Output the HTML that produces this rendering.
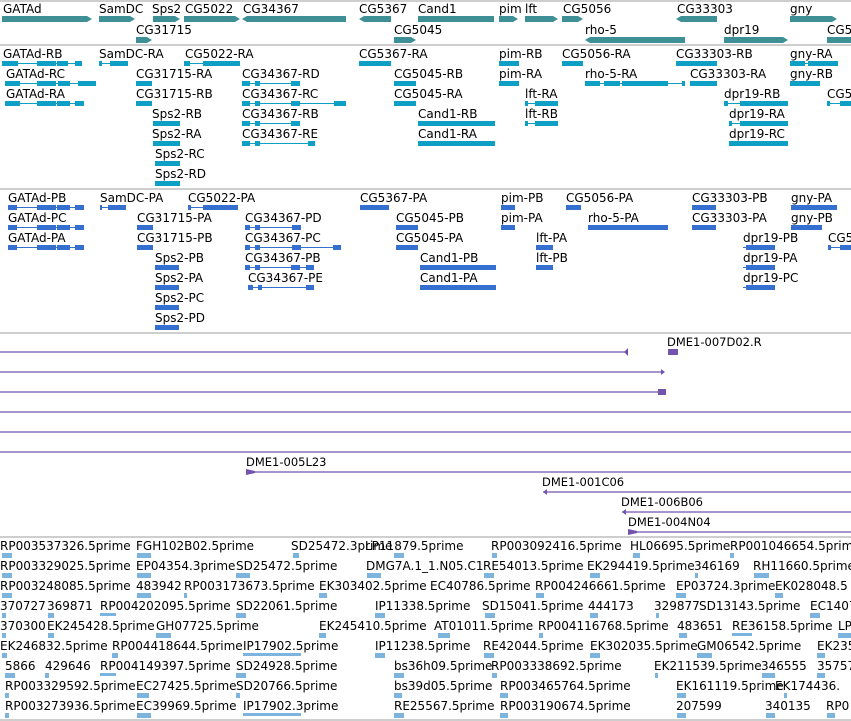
<!DOCTYPE html>
<html><head><meta charset="utf-8"><style>
html,body{margin:0;padding:0;background:#fff;width:851px;height:721px;overflow:hidden}
svg{display:block}
text{font-family:"DejaVu Sans","Liberation Sans",sans-serif;font-size:12px;fill:#000}
</style></head><body>
<svg width="851" height="721" viewBox="0 0 851 721" xmlns="http://www.w3.org/2000/svg">
<g stroke="#bdbdbd" stroke-width="1.5">
<line x1="0" y1="1" x2="851" y2="1"/><line x1="0" y1="45" x2="851" y2="45"/><line x1="0" y1="189" x2="851" y2="189"/><line x1="0" y1="333" x2="851" y2="333"/><line x1="0" y1="537" x2="851" y2="537"/><line x1="0" y1="720" x2="851" y2="720"/>
</g>

<!-- Track 1 genes -->
<g fill="#3f9096">
<polygon points="2,16 87,16 92,19 87,22 2,22"/>
<polygon points="99,16 130,16 135,19 130,22 99,22"/>
<polygon points="153,16 175,16 180,19 175,22 153,22"/>
<polygon points="184,16 235,16 240,19 235,22 184,22"/>
<polygon points="242,19 247,16 346,16 346,22 247,22"/>
<polygon points="359,19 364,16 391,16 391,22 364,22"/>
<polygon points="418,16 494,16 494,22 418,22"/>
<polygon points="499,16 513,16 518,19 513,22 499,22"/>
<polygon points="525,16 553,16 558,19 553,22 525,22"/>
<polygon points="562,16 578,16 583,19 578,22 562,22"/>
<polygon points="676,19 681,16 717,16 717,22 681,22"/>
<polygon points="790,16 832,16 837,19 832,22 790,22"/>
<polygon points="136,37 147,37 152,40 147,43 136,43"/>
<polygon points="394,37 411,37 416,40 411,43 394,43"/>
<polygon points="585,40 590,37 685,37 685,43 590,43"/>
<polygon points="724,37 783,37 788,40 783,43 724,43"/>
<polygon points="827,37 851,37 851,43 827,43"/>
</g>
<g>
<text x="3" y="13">GATAd</text><text x="99" y="13">SamDC</text><text x="152" y="13">Sps2</text><text x="185" y="13">CG5022</text><text x="243" y="13">CG34367</text><text x="359" y="13">CG5367</text><text x="418" y="13">Cand1</text><text x="499" y="13">pim</text><text x="525" y="13">lft</text><text x="563" y="13">CG5056</text><text x="677" y="13">CG33303</text><text x="790" y="13">gny</text>
<text x="136" y="34">CG31715</text><text x="394" y="34">CG5045</text><text x="585" y="34">rho-5</text><text x="724" y="34">dpr19</text><text x="827" y="34">CG5</text>
</g>

<!-- Track 2 transcripts -->
<g fill="#0e9fc4" stroke="#0e9fc4">
<g stroke-width="1">
<line x1="2" y1="63.5" x2="82" y2="63.5"/><line x1="99" y1="63.5" x2="128" y2="63.5"/><line x1="184" y1="63.5" x2="240" y2="63.5"/><line x1="790" y1="63.5" x2="838" y2="63.5"/>
<line x1="5" y1="83.5" x2="96" y2="83.5"/><line x1="242" y1="83.5" x2="300" y2="83.5"/><line x1="585" y1="83.5" x2="685" y2="83.5"/>
<line x1="5" y1="103.5" x2="84" y2="103.5"/><line x1="242" y1="103.5" x2="346" y2="103.5"/><line x1="525" y1="103.5" x2="558" y2="103.5"/><line x1="724" y1="103.5" x2="788" y2="103.5"/><line x1="827" y1="103.5" x2="851" y2="103.5"/>
<line x1="242" y1="123.5" x2="300" y2="123.5"/><line x1="525" y1="123.5" x2="558" y2="123.5"/><line x1="729" y1="123.5" x2="788" y2="123.5"/>
<line x1="242" y1="143.5" x2="315" y2="143.5"/><line x1="729" y1="143.5" x2="788" y2="143.5"/>
</g>
<g stroke="none">
<rect x="2" y="61" width="16" height="5"/><rect x="37" y="61" width="19" height="5"/><rect x="57" y="61" width="11" height="5"/><rect x="75" y="61" width="7" height="5"/>
<rect x="99" y="61" width="3" height="5"/><rect x="110" y="61" width="18" height="5"/>
<rect x="184" y="61" width="6" height="5"/><rect x="203" y="61" width="37" height="5"/>
<rect x="359" y="61" width="32" height="5"/><rect x="499" y="61" width="20" height="5"/><rect x="562" y="61" width="21" height="5"/><rect x="676" y="61" width="41" height="5"/>
<rect x="790" y="61" width="15" height="5"/><rect x="808" y="61" width="30" height="5"/>
<rect x="5" y="81" width="15" height="5"/><rect x="37" y="81" width="19" height="5"/><rect x="58" y="81" width="12" height="5"/><rect x="78" y="81" width="18" height="5"/>
<rect x="136" y="81" width="16" height="5"/><rect x="242" y="81" width="8" height="5"/><rect x="255" y="81" width="5" height="5"/><rect x="291" y="81" width="9" height="5"/>
<rect x="394" y="81" width="22" height="5"/><rect x="499" y="81" width="20" height="5"/>
<rect x="585" y="81" width="15" height="5"/><rect x="604" y="81" width="16" height="5"/><rect x="622" y="81" width="46" height="5"/><rect x="682" y="81" width="3" height="5"/>
<rect x="690" y="81" width="27" height="5"/><rect x="790" y="81" width="30" height="5"/>
<rect x="5" y="101" width="15" height="5"/><rect x="37" y="101" width="19" height="5"/><rect x="57" y="101" width="13" height="5"/><rect x="75" y="101" width="9" height="5"/>
<rect x="136" y="101" width="16" height="5"/><rect x="242" y="101" width="8" height="5"/><rect x="255" y="101" width="5" height="5"/><rect x="291" y="101" width="9" height="5"/><rect x="334" y="101" width="12" height="5"/>
<rect x="394" y="101" width="22" height="5"/><rect x="525" y="101" width="3" height="5"/><rect x="535" y="101" width="23" height="5"/>
<rect x="724" y="101" width="4" height="5"/><rect x="740" y="101" width="48" height="5"/><rect x="827" y="101" width="3" height="5"/><rect x="840" y="101" width="11" height="5"/>
<rect x="153" y="121" width="27" height="5"/><rect x="242" y="121" width="8" height="5"/><rect x="255" y="121" width="5" height="5"/><rect x="291" y="121" width="9" height="5"/>
<rect x="418" y="121" width="77" height="5"/><rect x="525" y="121" width="3" height="5"/><rect x="535" y="121" width="23" height="5"/><rect x="729" y="121" width="3" height="5"/><rect x="740" y="121" width="48" height="5"/>
<rect x="153" y="141" width="27" height="5"/><rect x="242" y="141" width="8" height="5"/><rect x="255" y="141" width="5" height="5"/><rect x="308" y="141" width="7" height="5"/>
<rect x="418" y="141" width="77" height="5"/><rect x="729" y="141" width="59" height="5"/>
<rect x="155" y="161" width="25" height="5"/><rect x="155" y="181" width="25" height="5"/>
</g>
</g>
<g>
<text x="3" y="58">GATAd-RB</text><text x="99" y="58">SamDC-RA</text><text x="185" y="58">CG5022-RA</text><text x="359" y="58">CG5367-RA</text><text x="499" y="58">pim-RB</text><text x="562" y="58">CG5056-RA</text><text x="676" y="58">CG33303-RB</text><text x="790" y="58">gny-RA</text>
<text x="6" y="78">GATAd-RC</text><text x="136" y="78">CG31715-RA</text><text x="242" y="78">CG34367-RD</text><text x="394" y="78">CG5045-RB</text><text x="499" y="78">pim-RA</text><text x="585" y="78">rho-5-RA</text><text x="690" y="78">CG33303-RA</text><text x="790" y="78">gny-RB</text>
<text x="6" y="98">GATAd-RA</text><text x="136" y="98">CG31715-RB</text><text x="242" y="98">CG34367-RC</text><text x="394" y="98">CG5045-RA</text><text x="525" y="98">lft-RA</text><text x="724" y="98">dpr19-RB</text><text x="827" y="98">CG5</text>
<text x="152" y="118">Sps2-RB</text><text x="242" y="118">CG34367-RB</text><text x="418" y="118">Cand1-RB</text><text x="525" y="118">lft-RB</text><text x="729" y="118">dpr19-RA</text>
<text x="152" y="138">Sps2-RA</text><text x="242" y="138">CG34367-RE</text><text x="418" y="138">Cand1-RA</text><text x="729" y="138">dpr19-RC</text>
<text x="155" y="158">Sps2-RC</text><text x="155" y="178">Sps2-RD</text>
</g>

<!-- Track 3 proteins -->
<g fill="#3570d0" stroke="#3570d0">
<g stroke-width="1">
<line x1="8" y1="207.5" x2="84" y2="207.5"/><line x1="100" y1="207.5" x2="126" y2="207.5"/><line x1="188" y1="207.5" x2="238" y2="207.5"/>
<line x1="8" y1="227.5" x2="84" y2="227.5"/><line x1="245" y1="227.5" x2="301" y2="227.5"/><line x1="588" y1="227.5" x2="668" y2="227.5"/>
<line x1="8" y1="247.5" x2="84" y2="247.5"/><line x1="245" y1="247.5" x2="341" y2="247.5"/><line x1="743" y1="247.5" x2="775" y2="247.5"/><line x1="828" y1="247.5" x2="851" y2="247.5"/>
<line x1="245" y1="267.5" x2="314" y2="267.5"/><line x1="743" y1="267.5" x2="775" y2="267.5"/>
<line x1="248" y1="287.5" x2="314" y2="287.5"/><line x1="743" y1="287.5" x2="775" y2="287.5"/>
</g>
<g stroke="none">
<rect x="8" y="205" width="9" height="5"/><rect x="37" y="205" width="19" height="5"/><rect x="57" y="205" width="13" height="5"/><rect x="75" y="205" width="9" height="5"/>
<rect x="8" y="225" width="9" height="5"/><rect x="37" y="225" width="19" height="5"/><rect x="57" y="225" width="13" height="5"/><rect x="75" y="225" width="9" height="5"/>
<rect x="8" y="245" width="9" height="5"/><rect x="37" y="245" width="19" height="5"/><rect x="57" y="245" width="13" height="5"/><rect x="75" y="245" width="9" height="5"/>
<rect x="100" y="205" width="2" height="5"/><rect x="108" y="205" width="18" height="5"/>
<rect x="188" y="205" width="3" height="5"/><rect x="203" y="205" width="35" height="5"/>
<rect x="360" y="205" width="29" height="5"/><rect x="501" y="205" width="14" height="5"/><rect x="566" y="205" width="15" height="5"/><rect x="692" y="205" width="24" height="5"/><rect x="791" y="205" width="46" height="5"/>
<rect x="137" y="225" width="16" height="5"/><rect x="245" y="225" width="5" height="5"/><rect x="255" y="225" width="5" height="5"/><rect x="292" y="225" width="9" height="5"/>
<rect x="396" y="225" width="22" height="5"/><rect x="501" y="225" width="14" height="5"/><rect x="588" y="225" width="80" height="5"/><rect x="692" y="225" width="24" height="5"/><rect x="791" y="225" width="31" height="5"/>
<rect x="137" y="245" width="16" height="5"/><rect x="245" y="245" width="5" height="5"/><rect x="255" y="245" width="5" height="5"/><rect x="292" y="245" width="9" height="5"/><rect x="333" y="245" width="8" height="5"/>
<rect x="396" y="245" width="22" height="5"/><rect x="536" y="245" width="17" height="5"/><rect x="746" y="245" width="29" height="5"/><rect x="840" y="245" width="11" height="5"/><rect x="828" y="245" width="3" height="5"/>
<rect x="155" y="265" width="24" height="5"/><rect x="245" y="265" width="5" height="5"/><rect x="255" y="265" width="5" height="5"/><rect x="291" y="265" width="9" height="5"/><rect x="306" y="265" width="8" height="5"/>
<rect x="420" y="265" width="76" height="5"/><rect x="536" y="265" width="17" height="5"/><rect x="746" y="265" width="29" height="5"/>
<rect x="155" y="285" width="24" height="5"/><rect x="248" y="285" width="5" height="5"/><rect x="258" y="285" width="4" height="5"/><rect x="306" y="285" width="8" height="5"/>
<rect x="420" y="285" width="76" height="5"/><rect x="746" y="285" width="29" height="5"/>
<rect x="155" y="305" width="24" height="5"/><rect x="155" y="325" width="24" height="5"/>
</g>
</g>
<g>
<text x="8" y="202">GATAd-PB</text><text x="100" y="202">SamDC-PA</text><text x="188" y="202">CG5022-PA</text><text x="360" y="202">CG5367-PA</text><text x="501" y="202">pim-PB</text><text x="566" y="202">CG5056-PA</text><text x="692" y="202">CG33303-PB</text><text x="791" y="202">gny-PA</text>
<text x="8" y="222">GATAd-PC</text><text x="137" y="222">CG31715-PA</text><text x="245" y="222">CG34367-PD</text><text x="396" y="222">CG5045-PB</text><text x="501" y="222">pim-PA</text><text x="588" y="222">rho-5-PA</text><text x="692" y="222">CG33303-PA</text><text x="791" y="222">gny-PB</text>
<text x="8" y="242">GATAd-PA</text><text x="137" y="242">CG31715-PB</text><text x="245" y="242">CG34367-PC</text><text x="396" y="242">CG5045-PA</text><text x="536" y="242">lft-PA</text><text x="743" y="242">dpr19-PB</text><text x="828" y="242">CG5</text>
<text x="155" y="262">Sps2-PB</text><text x="245" y="262">CG34367-PB</text><text x="420" y="262">Cand1-PB</text><text x="536" y="262">lft-PB</text><text x="743" y="262">dpr19-PA</text>
<text x="155" y="282">Sps2-PA</text><text x="248" y="282">CG34367-PE</text><text x="420" y="282">Cand1-PA</text><text x="743" y="282">dpr19-PC</text>
<text x="155" y="302">Sps2-PC</text><text x="155" y="322">Sps2-PD</text>
</g>

<!-- Track 4 clones -->
<g stroke="#7453ad" stroke-width="1.3" fill="#7453ad">
<line x1="0" y1="352" x2="628" y2="352"/><polygon points="624,352 628,348 628,356" stroke="none"/><rect x="668" y="349" width="10" height="6" stroke="none"/>
<line x1="0" y1="372" x2="664" y2="372"/><polygon points="661,369 665,372 661,375" stroke="none"/>
<line x1="0" y1="392" x2="666" y2="392"/><rect x="658" y="389" width="8" height="6" stroke="none"/>
<line x1="0" y1="412" x2="851" y2="412"/><line x1="0" y1="432" x2="851" y2="432"/><line x1="0" y1="452" x2="851" y2="452"/>
<line x1="246" y1="472" x2="851" y2="472"/><polygon points="246,469 255,471 255,473 246,475" stroke="none"/>
<line x1="543" y1="492" x2="851" y2="492"/><polygon points="543,492 547,489 547,495" stroke="none"/>
<line x1="622" y1="512" x2="851" y2="512"/><polygon points="622,512 626,509 626,515" stroke="none"/>
<line x1="628" y1="532" x2="851" y2="532"/><polygon points="628,529 637,531 637,533 628,535" stroke="none"/>
</g>
<g style="font-size:11.5px">
<text x="667" y="346" style="font-size:11.5px">DME1-007D02.R</text>
<text x="246" y="466" style="font-size:11.5px">DME1-005L23</text>
<text x="542" y="486" style="font-size:11.5px">DME1-001C06</text>
<text x="621" y="506" style="font-size:11.5px">DME1-006B06</text>
<text x="628" y="526" style="font-size:11.5px">DME1-004N04</text>
</g>

<!-- Track 5 ESTs -->
<g fill="#7db4dd">
<rect x="2" y="553" width="10" height="5"/><rect x="137" y="553" width="14" height="5"/><rect x="293" y="553" width="6" height="5"/><rect x="394" y="553" width="10" height="5"/><rect x="492" y="553" width="5" height="5"/><rect x="633" y="553" width="7" height="5"/><rect x="730" y="553" width="4" height="5"/>
<rect x="2" y="573" width="10" height="5"/><rect x="137" y="573" width="14" height="5"/><rect x="236" y="573" width="14" height="5"/><rect x="367" y="573" width="14" height="5"/><rect x="484" y="573" width="10" height="5"/><rect x="590" y="573" width="10" height="5"/><rect x="695" y="573" width="3" height="5"/><rect x="754" y="573" width="15" height="5"/>
<rect x="2" y="593" width="10" height="5"/><rect x="137" y="593" width="14" height="5"/><rect x="184" y="593" width="3" height="5"/><rect x="319" y="593" width="8" height="5"/><rect x="536" y="593" width="8" height="5"/><rect x="676" y="593" width="10" height="5"/><rect x="775" y="593" width="8" height="5"/>
<rect x="2" y="613" width="4" height="5"/><rect x="48" y="613" width="6" height="5"/><rect x="100" y="613" width="16" height="3"/><rect x="236" y="613" width="10" height="5"/><rect x="375" y="613" width="10" height="5"/><rect x="485" y="613" width="10" height="5"/><rect x="590" y="613" width="8" height="5"/><rect x="656" y="613" width="3" height="5"/><rect x="810" y="613" width="10" height="5"/>
<rect x="2" y="633" width="4" height="5"/><rect x="48" y="633" width="6" height="5"/><rect x="156" y="633" width="15" height="5"/><rect x="319" y="633" width="7" height="5"/><rect x="438" y="633" width="12" height="5"/><rect x="539" y="633" width="4" height="5"/><rect x="679" y="633" width="8" height="5"/><rect x="732" y="633" width="20" height="3"/><rect x="838" y="633" width="13" height="5"/>
<rect x="2" y="653" width="5" height="5"/><rect x="112" y="653" width="6" height="5"/><rect x="243" y="653" width="58" height="3"/><rect x="375" y="653" width="10" height="5"/><rect x="484" y="653" width="10" height="5"/><rect x="590" y="653" width="10" height="5"/><rect x="697" y="653" width="15" height="5"/><rect x="817" y="653" width="8" height="5"/>
<rect x="5" y="673" width="10" height="5"/><rect x="45" y="673" width="4" height="5"/><rect x="100" y="673" width="16" height="3"/><rect x="236" y="673" width="10" height="5"/><rect x="394" y="673" width="10" height="5"/><rect x="492" y="673" width="5" height="5"/><rect x="655" y="673" width="3" height="5"/><rect x="762" y="673" width="13" height="5"/><rect x="817" y="673" width="8" height="5"/>
<rect x="5" y="693" width="4" height="5"/><rect x="137" y="693" width="12" height="5"/><rect x="236" y="693" width="4" height="5"/><rect x="394" y="693" width="8" height="5"/><rect x="500" y="693" width="8" height="5"/><rect x="677" y="693" width="9" height="5"/><rect x="784" y="693" width="3" height="5"/>
<rect x="5" y="713" width="4" height="5"/><rect x="137" y="713" width="14" height="5"/><rect x="243" y="713" width="58" height="3"/><rect x="394" y="713" width="10" height="5"/><rect x="500" y="713" width="8" height="5"/><rect x="677" y="713" width="9" height="5"/><rect x="766" y="713" width="9" height="5"/><rect x="827" y="713" width="8" height="5"/>
</g>
<g>
<text x="0" y="550">RP003537326.5prime</text><text x="136" y="550">FGH102B02.5prime</text><text x="291" y="550">SD25472.3prime</text><text x="365" y="550">LP11879.5prime</text><text x="491" y="550">RP003092416.5prime</text><text x="630" y="550">HL06695.5prime</text><text x="730" y="550">RP001046654.5prime</text>
<text x="0" y="570">RP003329025.5prime</text><text x="136" y="570">EP04354.3prime</text><text x="236" y="570">SD25472.5prime</text><text x="366" y="570">DMG7A.1_1.N05.C1</text><text x="483" y="570">RE54013.5prime</text><text x="587" y="570">EK294419.5prime</text><text x="694" y="570">346169</text><text x="753" y="570">RH11660.5prime</text>
<text x="0" y="590">RP003248085.5prime</text><text x="136" y="590">483942</text><text x="184" y="590">RP003173673.5prime</text><text x="319" y="590">EK303402.5prime</text><text x="430" y="590">EC40786.5prime</text><text x="535" y="590">RP004246661.5prime</text><text x="676" y="590">EP03724.3prime</text><text x="775" y="590">EK028048.5</text>
<text x="0" y="610">370727</text><text x="47" y="610">369871</text><text x="100" y="610">RP004202095.5prime</text><text x="236" y="610">SD22061.5prime</text><text x="375" y="610">IP11338.5prime</text><text x="482" y="610">SD15041.5prime</text><text x="588" y="610">444173</text><text x="654" y="610">329877</text><text x="699" y="610">SD13143.5prime</text><text x="810" y="610">EC1407</text>
<text x="0" y="630">370300</text><text x="47" y="630">EK245428.5prime</text><text x="156" y="630">GH07725.5prime</text><text x="319" y="630">EK245410.5prime</text><text x="434" y="630">AT01011.5prime</text><text x="538" y="630">RP004116768.5prime</text><text x="677" y="630">483651</text><text x="732" y="630">RE36158.5prime</text><text x="838" y="630">LP</text>
<text x="0" y="650">EK246832.5prime</text><text x="112" y="650">RP004418644.5prime</text><text x="243" y="650">IP17902.5prime</text><text x="375" y="650">IP11238.5prime</text><text x="483" y="650">RE42044.5prime</text><text x="590" y="650">EK302035.5prime</text><text x="697" y="650">GM06542.5prime</text><text x="817" y="650">EK235</text>
<text x="5" y="670">5866</text><text x="45" y="670">429646</text><text x="100" y="670">RP004149397.5prime</text><text x="236" y="670">SD24928.5prime</text><text x="394" y="670">bs36h09.5prime</text><text x="491" y="670">RP003338692.5prime</text><text x="654" y="670">EK211539.5prime</text><text x="761" y="670">346555</text><text x="817" y="670">35757</text>
<text x="5" y="690">RP003329592.5prime</text><text x="136" y="690">EC27425.5prime</text><text x="236" y="690">SD20766.5prime</text><text x="394" y="690">bs39d05.5prime</text><text x="500" y="690">RP003465764.5prime</text><text x="676" y="690">EK161119.5prime</text><text x="775" y="690">EK174436.</text>
<text x="5" y="710">RP003273936.5prime</text><text x="136" y="710">EC39969.5prime</text><text x="243" y="710">IP17902.3prime</text><text x="394" y="710">RE25567.5prime</text><text x="500" y="710">RP003190674.5prime</text><text x="676" y="710">207599</text><text x="765" y="710">340135</text><text x="826" y="710">RP0</text>
</g>
</svg>
</body></html>
